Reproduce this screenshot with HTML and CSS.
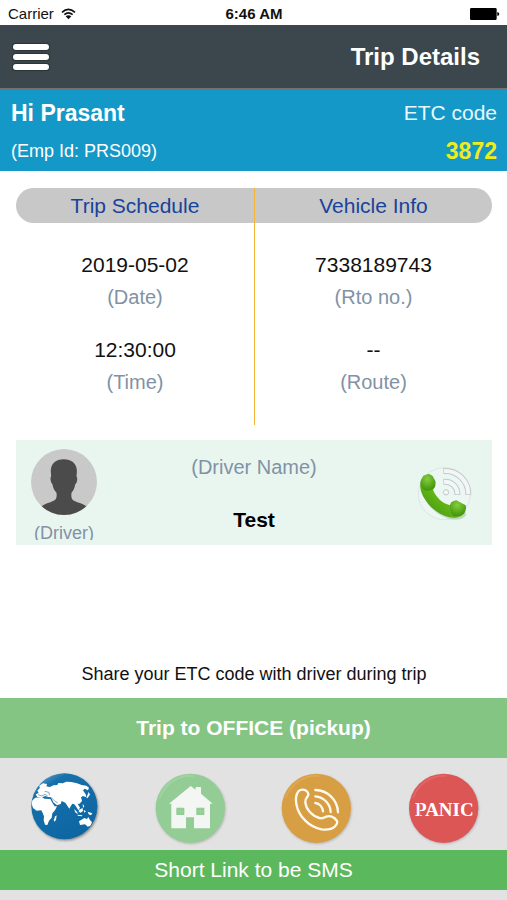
FILE: index.html
```html
<!DOCTYPE html>
<html lang="en">
<head>
    <meta charset="UTF-8">
    <meta name="viewport" content="width=device-width, initial-scale=1.0">
    <title>Trip Details</title>
    <link rel="stylesheet" href="styles.css">
</head>
<body>

    <div class="status-bar">
        <div class="carrier">
            <span>Carrier</span>
            <svg class="wifi" viewBox="0 0 45 36" aria-hidden="true">
                <path d="M3 13Q22 -5 42 13M10 20Q22 9 35 20" fill="none" stroke="#111" stroke-width="5"/>
                <path d="M14 25Q22 18 31 25L22.500 34Z" fill="#111"/>
            </svg>
        </div>
        <span class="clock">6:46 AM</span>
        <svg class="battery" viewBox="0 0 90 36" aria-hidden="true">
            <rect x="0" y="0" width="80" height="36" rx="4"/>
            <path d="M82 12Q88 13 88 18T82 24Z"/>
        </svg>
    </div>

    <header class="top-bar">
        <button class="menu-btn" type="button" aria-label="Menu">
            <span></span>
            <span></span>
            <span></span>
        </button>
        <h1>Trip Details</h1>
    </header>

    <section class="greeting">
        <div>
            <p class="user-name">Hi Prasant</p>
            <p class="emp-id">(Emp Id: PRS009)</p>
        </div>
        <div class="etc">
            <p class="etc-label">ETC code</p>
            <p class="etc-code">3872</p>
        </div>
    </section>

    <main>
        <div class="trip-info">
            <section class="info-col">
                <h2>Trip Schedule</h2>
                <div class="info-item">
                    <p class="value">2019-05-02</p>
                    <p class="label">(Date)</p>
                </div>
                <div class="info-item">
                    <p class="value">12:30:00</p>
                    <p class="label">(Time)</p>
                </div>
            </section>
            <section class="info-col">
                <h2>Vehicle Info</h2>
                <div class="info-item">
                    <p class="value">7338189743</p>
                    <p class="label">(Rto no.)</p>
                </div>
                <div class="info-item">
                    <p class="value">--</p>
                    <p class="label">(Route)</p>
                </div>
            </section>
        </div>

        <section class="driver-card">
            <div class="driver-photo">
                <svg viewBox="0 0 200 200" aria-hidden="true">
                    <clipPath id="avatar"><circle cx="100" cy="100" r="100"/></clipPath>
                    <circle cx="100" cy="100" r="100" fill="#c9c9c9"/>
                    <path clip-path="url(#avatar)" fill="#4b4b4b" d="M99 31C75 31 59 45 60 68L61 83C57 86 60 104 65 107C67 120 71 126 77 132C80 151 74 157 59 161C48 164 39 168 30 175V200H170V175C161 168 151 164 140 161C125 157 120 151 123 132C129 126 132 119 134 107C140 104 142 87 138 83L139 68C140 45 123 31 99 31Z"/>
                </svg>
                <p>(Driver)</p>
            </div>
            <div class="driver-name">
                <p class="label">(Driver Name)</p>
                <p class="name">Test</p>
            </div>
            <button class="call-btn" type="button" aria-label="Call driver">
                <svg viewBox="483 100 174 174" aria-hidden="true">
                    <defs>
                        <linearGradient id="handset" x1="0" y1="1" x2="1" y2="0">
                            <stop offset="0" stop-color="#3c8f08"/>
                            <stop offset="0.5" stop-color="#65b71a"/>
                            <stop offset="1" stop-color="#8bd438"/>
                        </linearGradient>
                        <radialGradient id="earpiece" cx="0.45" cy="0.3" r="0.7">
                            <stop offset="0" stop-color="#86cf3c"/>
                            <stop offset="1" stop-color="#3e920c"/>
                        </radialGradient>
                    </defs>
                    <circle cx="571" cy="189" r="78" fill="#ecf7f3" stroke="#dce6e2" stroke-width="3"/>
                    <g fill="none">
                        <path d="M568 121H574A69 69 0 0 1 643 188V193M568 153H574A36 36 0 0 1 610 188V193" stroke="#c3cac9" stroke-width="18"/>
                        <path d="M570 121H574A69 69 0 0 1 643 188V191M570 153H574A36 36 0 0 1 610 188V191" stroke="#f3f6f6" stroke-width="12"/>
                    </g>
                    <circle cx="576" cy="185" r="8" fill="#f3f6f6" stroke="#c3cac9" stroke-width="3"/>
                    <path d="M504 143C496 157 497 177 507 196C522 226 552 252 586 261C606 265 624 261 633 249L628 226L588 224C565 218 548 202 538 183L532 150Z" fill="#7f9b78" opacity="0.35" transform="translate(3 5)"/>
                    <path d="M504 143C496 157 497 177 507 196C522 226 552 252 586 260C606 264 624 259 632 247L628 226L588 224C565 218 548 202 537 179L532 150Z" fill="url(#handset)"/>
                    <path d="M508 135L522 130Q530 130 536 137L544 151Q547 166 538 175Q524 184 510 178Q498 169 500 151Z" fill="url(#earpiece)"/>
                    <path d="M588 222Q590 213 599 211L607 209L635 224Q639 238 629 249Q615 260 600 256Q586 247 588 222Z" fill="url(#earpiece)"/>
                </svg>
            </button>
        </section>

        <p class="share-note">Share your ETC code with driver during trip</p>
    </main>

    <footer>
        <button class="trip-btn" type="button">Trip to OFFICE (pickup)</button>

        <nav class="actions">
            <button type="button" aria-label="Map">
                <svg viewBox="25 39 210 210" aria-hidden="true">
                    <defs>
                        <linearGradient id="sea" x1="0" y1="0" x2="0.6" y2="1">
                            <stop offset="0" stop-color="#7dbbe0"/>
                            <stop offset="0.25" stop-color="#1670aa"/>
                            <stop offset="1" stop-color="#0d66a2"/>
                        </linearGradient>
                        <clipPath id="globe"><circle cx="134" cy="139" r="98"/></clipPath>
                    </defs>
                    <circle class="disc" cx="134" cy="139" r="99" fill="url(#sea)"/>
                    <g fill="#fff" clip-path="url(#globe)">
                        <path d="M53 92L61 83L58 77L70 70L82 72L80 79L91 81L101 76L113 75L116 69L129 70L140 65L155 66L172 70L186 75L200 77L208 83L205 91L195 86L190 91L198 103L200 112L190 108L184 112L187 123L180 131L174 131L181 143L176 151L170 141L164 133L158 131L154 137L149 146L143 137L137 128L126 123L123 132L112 136L101 127L94 112L85 111L77 108L67 112L53 111L48 103L57 99Z"/>
                        <path d="M36 123L47 113L67 111L74 116L92 117L98 128L105 139L112 139L106 151L98 160L96 173L88 182L83 195L76 194L72 181L73 169L68 157L65 151L51 152L40 144L37 135Z"/>
                        <path d="M107 169L111 166L109 180L104 185L102 180Z"/>
                        <path d="M178 184L188 178L194 174L202 177L206 171L211 180L217 187L213 197L204 200L196 193L181 195Z"/>
                        <path d="M164 147L173 157L174 163L166 156ZM178 149L189 144L190 153L183 158L177 155ZM204 155L218 160L214 166L207 163ZM174 164L188 166L187 169L174 167ZM192 150L199 154L194 158ZM189 131L194 139L190 144ZM207 96L211 104L203 115L200 113Z"/>
                    </g>
                    <path d="M55 104L67 108L76 103L84 108M94 112L106 124L114 128M75 94L88 97L89 106" fill="none" stroke="#8fa6b4" stroke-width="3"/>
                </svg>
            </button>
            <button type="button" aria-label="Home">
                <svg viewBox="30 39 210 210" aria-hidden="true">
                    <circle class="disc soft" cx="136" cy="145" r="104" fill="#94cc95"/>
                    <path d="M45 112A97 97 0 0 1 145 48" fill="none" stroke="#a0d5a1" stroke-width="5" stroke-linecap="round"/>
                    <path fill="#f4f6f4" fill-rule="evenodd" d="M137 78L152 89V81H168V101L203 131H195V205H147V172H123V205H79V131H72ZM94 143V165H118V143ZM154 143V165H178V143Z"/>
                    <path d="M106 143V165M94 154H118M166 143V165M154 154H178" stroke="#a5d3a5" stroke-width="2"/>
                </svg>
            </button>
            <button type="button" aria-label="Call">
                <svg viewBox="36 39 210 210" aria-hidden="true">
                    <circle class="disc soft" cx="139" cy="145" r="104" fill="#d89e44"/>
                    <path d="M48 112A97 97 0 0 1 145 48" fill="none" stroke="#dfa952" stroke-width="5" stroke-linecap="round"/>
                    <g fill="none" stroke="#fff9ee" stroke-width="7" stroke-linecap="round" stroke-linejoin="round">
                        <path d="M85 94C91 89 100 88 107 91C114 96 117 103 113 109C108 115 105 119 106 127C108 148 126 168 148 174C158 177 163 173 169 170C181 165 194 172 201 183C203 188 199 195 194 200C185 208 170 210 155 208C117 201 85 169 79 132C76 117 78 104 85 94Z"/>
                        <path d="M136 90A69 69 0 0 1 204 157M136 109A50 50 0 0 1 182 156M136 129A28 28 0 0 1 159 154"/>
                    </g>
                </svg>
            </button>
            <button type="button" aria-label="Panic">
                <svg viewBox="41 39 210 210" aria-hidden="true">
                    <circle class="disc soft" cx="145" cy="145" r="104" fill="#dc5656"/>
                    <path d="M54 112A97 97 0 0 1 151 48" fill="none" stroke="#e26764" stroke-width="5" stroke-linecap="round"/>
                    <text class="panic-text" x="147" y="167" text-anchor="middle">PANIC</text>
                    <path d="M73 124V169M195 124V169" stroke="#dc5656" stroke-width="2"/>
                </svg>
            </button>
        </nav>

        <button class="sms-btn" type="button">Short Link to be SMS</button>
    </footer>

</body>
</html>
```
FILE: styles.css
```css
* {
    box-sizing: border-box;
}
body {
    font-family: "Liberation Sans", Arial, Helvetica, sans-serif;
    background-color: #fff;
    color: #111;
    display: flex;
    flex-direction: column;
    min-height: 100vh;
    margin: 0;
}
h1, h2, p {
    margin: 0;
}
button {
    font-family: inherit;
    border: none;
    padding: 0;
    background: none;
    cursor: pointer;
}
svg {
    display: block;
}

/* Status bar */
.status-bar {
    display: grid;
    grid-template-columns: 1fr auto 1fr;
    align-items: center;
    padding: 2px 7px 0 8px;
    font-size: 15px;
    line-height: 23px;
}
.carrier {
    display: flex;
    align-items: center;
    gap: 7px;
}
.wifi {
    width: 15px;
    height: 12px;
}
.clock {
    font-weight: bold;
}
.battery {
    width: 30px;
    height: 12px;
    justify-self: end;
}

/* Header */
.top-bar {
    display: flex;
    justify-content: space-between;
    align-items: center;
    background-color: #3b474c;
    border-bottom: 2px solid #77716e;
    padding: 16px 27px 15px 13px;
}
.menu-btn {
    display: flex;
    flex-direction: column;
    gap: 4px;
    width: 36px;
}
.menu-btn span {
    height: 6px;
    border-radius: 3px;
    background-color: #fff;
    box-shadow: 0 0 1px 1px #2c3437;
}
h1 {
    color: #fff;
    font-size: 24px;
    line-height: 32px;
}

/* Greeting */
.greeting {
    display: flex;
    justify-content: space-between;
    background-color: #1498c8;
    color: #fff;
    padding: 4px 10px 1px 11px;
    line-height: 38px;
}
.user-name {
    font-size: 23px;
    font-weight: bold;
}
.emp-id {
    font-size: 18px;
}
.etc {
    text-align: right;
}
.etc-label {
    font-size: 21px;
    color: #e8f8ff;
}
.etc-code {
    font-size: 23px;
    font-weight: bold;
    color: #f0ec1c;
}

main {
    flex: 1;
    display: flex;
    flex-direction: column;
    padding: 17px 15px 8px 16px;
}
.label {
    font-size: 20px;
    color: #8292a4;
}

/* Trip schedule and vehicle */
.trip-info {
    display: grid;
    grid-template-columns: 1fr 1fr;
    text-align: center;
}
.info-col {
    line-height: 32px;
    padding-bottom: 27px;
}
.info-col + .info-col {
    border-left: 1px solid #f5b437;
}
h2 {
    background-color: #c8c8c8;
    border-radius: 18px 0 0 18px;
    color: #18439a;
    font-size: 21px;
    font-weight: normal;
    line-height: 35px;
    margin-bottom: 26px;
}
.info-col + .info-col h2 {
    border-radius: 0 18px 18px 0;
}
.info-item + .info-item {
    margin-top: 21px;
}
.value {
    font-size: 21px;
}

/* Driver */
.driver-card {
    display: grid;
    grid-template-columns: 96px 1fr 96px;
    background-color: #e9f6f0;
    margin-top: 15px;
    text-align: center;
}
.driver-photo {
    padding: 9px 0 5px;
}
.driver-photo svg {
    width: 66px;
    height: 66px;
    margin: 0 auto 8px;
}
.driver-photo p {
    font-size: 18px;
    line-height: 20px;
    height: 17px;
    overflow: hidden;
    color: #8292a4;
}
.driver-name .label {
    line-height: 54px;
}
.name {
    font-size: 21px;
    font-weight: bold;
    line-height: 51px;
    color: #000;
}
.call-btn {
    place-self: center;
}
.call-btn svg {
    width: 58px;
    height: 58px;
}
.share-note {
    margin-top: auto;
    font-size: 18px;
    line-height: 32px;
    text-align: center;
}

/* Bottom buttons */
footer {
    background-color: #e2e2e2;
    padding-bottom: 10px;
}
.trip-btn,
.sms-btn {
    display: block;
    width: 100%;
    color: #fff;
    font-size: 21px;
}
.trip-btn {
    background-color: #84c583;
    font-weight: bold;
    line-height: 60px;
}
.sms-btn {
    background-color: #5cb85c;
    line-height: 40px;
}
.actions {
    display: grid;
    grid-template-columns: repeat(4, 1fr);
    justify-items: center;
    padding: 15px 0 7px;
}
.actions svg {
    width: 70px;
    height: 70px;
    overflow: visible;
}
.disc {
    filter: drop-shadow(3px 4px 3px rgba(0, 0, 0, 0.4));
}
.disc.soft {
    filter: drop-shadow(2px 3px 3px rgba(0, 0, 0, 0.2));
}
.panic-text {
    font-family: "Liberation Serif", "Times New Roman", serif;
    font-size: 57px;
    font-weight: bold;
    fill: #fff;
}
```
